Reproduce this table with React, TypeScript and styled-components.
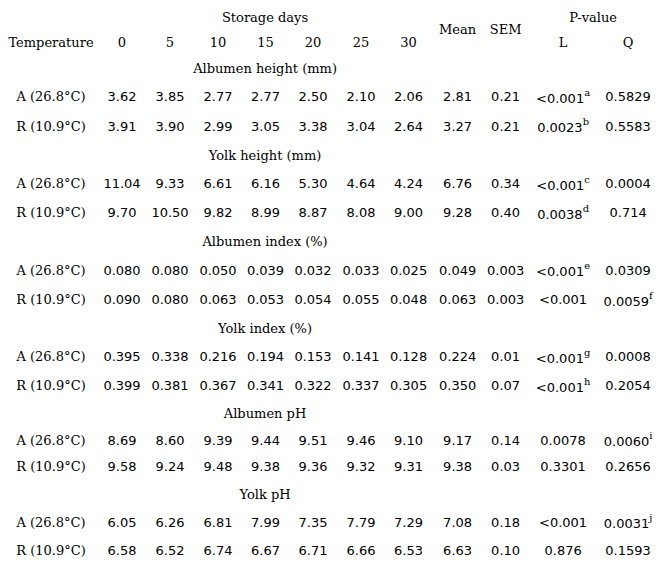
import React from "react";
import styled, { createGlobalStyle } from "styled-components";

const Global = createGlobalStyle`
  html, body { margin: 0; padding: 0; background: #fff; }
  body { font-family: "DejaVu Serif", serif; color: #000; }
`;

const Page = styled.div`
  width: 663px;
  height: 568px;
  padding: 4px 5px 0 4px;
  box-sizing: border-box;
  background: #fff;
`;

const Table = styled.table`
  width: 654px;
  table-layout: fixed;
  border-collapse: collapse;
  font-family: "DejaVu Serif", serif;
  font-size: 13px;
  color: #000;
`;

const Row = styled.tr<{ $h: number }>`
  height: ${(p) => p.$h}px;
`;

const Head = styled.th`
  font-weight: normal;
  text-align: center;
  vertical-align: middle;
  padding: 0;
  white-space: nowrap;
`;

const Title = styled.td`
  text-align: center;
  vertical-align: middle;
  padding: 0;
  white-space: nowrap;
`;

const Label = styled.td`
  text-align: center;
  vertical-align: middle;
  padding: 0;
  white-space: nowrap;
`;

const Num = styled.td`
  font-family: "DejaVu Sans", sans-serif;
  font-size: 13px;
  text-align: center;
  vertical-align: middle;
  padding: 0;
  white-space: nowrap;
`;

const Sup = styled.sup`
  font-family: "DejaVu Serif", serif;
  font-size: 10px;
  vertical-align: 7px;
  line-height: 1;
`;

type Cell = string | [string, string];

type Group = {
  title: string;
  h: number;
  rows: { label: string; h: number; values: Cell[] }[];
};

const groups: Group[] = [
  {
    title: "Albumen height (mm)",
    h: 27,
    rows: [
      { label: "A (26.8°C)", h: 29, values: ["3.62", "3.85", "2.77", "2.77", "2.50", "2.10", "2.06", "2.81", "0.21", ["<0.001", "a"], "0.5829"] },
      { label: "R (10.9°C)", h: 30, values: ["3.91", "3.90", "2.99", "3.05", "3.38", "3.04", "2.64", "3.27", "0.21", ["0.0023", "b"], "0.5583"] },
    ],
  },
  {
    title: "Yolk height (mm)",
    h: 28,
    rows: [
      { label: "A (26.8°C)", h: 29, values: ["11.04", "9.33", "6.61", "6.16", "5.30", "4.64", "4.24", "6.76", "0.34", ["<0.001", "c"], "0.0004"] },
      { label: "R (10.9°C)", h: 29, values: ["9.70", "10.50", "9.82", "8.99", "8.87", "8.08", "9.00", "9.28", "0.40", ["0.0038", "d"], "0.714"] },
    ],
  },
  {
    title: "Albumen index (%)",
    h: 28,
    rows: [
      { label: "A (26.8°C)", h: 30, values: ["0.080", "0.080", "0.050", "0.039", "0.032", "0.033", "0.025", "0.049", "0.003", ["<0.001", "e"], "0.0309"] },
      { label: "R (10.9°C)", h: 29, values: ["0.090", "0.080", "0.063", "0.053", "0.054", "0.055", "0.048", "0.063", "0.003", "<0.001", ["0.0059", "f"]] },
    ],
  },
  {
    title: "Yolk index (%)",
    h: 28,
    rows: [
      { label: "A (26.8°C)", h: 29, values: ["0.395", "0.338", "0.216", "0.194", "0.153", "0.141", "0.128", "0.224", "0.01", ["<0.001", "g"], "0.0008"] },
      { label: "R (10.9°C)", h: 29, values: ["0.399", "0.381", "0.367", "0.341", "0.322", "0.337", "0.305", "0.350", "0.07", ["<0.001", "h"], "0.2054"] },
    ],
  },
  {
    title: "Albumen pH",
    h: 27,
    rows: [
      { label: "A (26.8°C)", h: 26, values: ["8.69", "8.60", "9.39", "9.44", "9.51", "9.46", "9.10", "9.17", "0.14", "0.0078", ["0.0060", "i"]] },
      { label: "R (10.9°C)", h: 27, values: ["9.58", "9.24", "9.48", "9.38", "9.36", "9.32", "9.31", "9.38", "0.03", "0.3301", "0.2656"] },
    ],
  },
  {
    title: "Yolk pH",
    h: 28,
    rows: [
      { label: "A (26.8°C)", h: 28, values: ["6.05", "6.26", "6.81", "7.99", "7.35", "7.79", "7.29", "7.08", "0.18", "<0.001", ["0.0031", "j"]] },
      { label: "R (10.9°C)", h: 28, values: ["6.58", "6.52", "6.74", "6.67", "6.71", "6.66", "6.53", "6.63", "0.10", "0.876", "0.1593"] },
    ],
  },
];

const colWidths = [94, 48, 48, 48, 47, 48, 48, 47, 51, 45, 70, 60];
const days = ["0", "5", "10", "15", "20", "25", "30"];

function renderCell(c: Cell, i: number) {
  if (typeof c === "string") return <Num key={i}>{c}</Num>;
  return (
    <Num key={i}>
      {c[0]}
      <Sup>{c[1]}</Sup>
    </Num>
  );
}

export default function App() {
  return (
    <Page>
      <Global />
      <Table>
        <colgroup>
          {colWidths.map((w, i) => (
            <col key={i} style={{ width: w }} />
          ))}
        </colgroup>
        <thead>
          <Row $h={26}>
            <Head />
            <Head colSpan={7}>Storage days</Head>
            <Head rowSpan={2}>Mean</Head>
            <Head rowSpan={2}>SEM</Head>
            <Head colSpan={2}>P-value</Head>
          </Row>
          <Row $h={25}>
            <Head>Temperature</Head>
            {days.map((d) => (
              <Head key={d}>{d}</Head>
            ))}
            <Head>L</Head>
            <Head>Q</Head>
          </Row>
        </thead>
        <tbody>
          {groups.map((g) => (
            <React.Fragment key={g.title}>
              <Row $h={g.h}>
                <Title />
                <Title colSpan={7}>{g.title}</Title>
                <Title colSpan={4} />
              </Row>
              {g.rows.map((r) => (
                <Row $h={r.h} key={r.label}>
                  <Label>{r.label}</Label>
                  {r.values.map(renderCell)}
                </Row>
              ))}
            </React.Fragment>
          ))}
        </tbody>
      </Table>
    </Page>
  );
}
